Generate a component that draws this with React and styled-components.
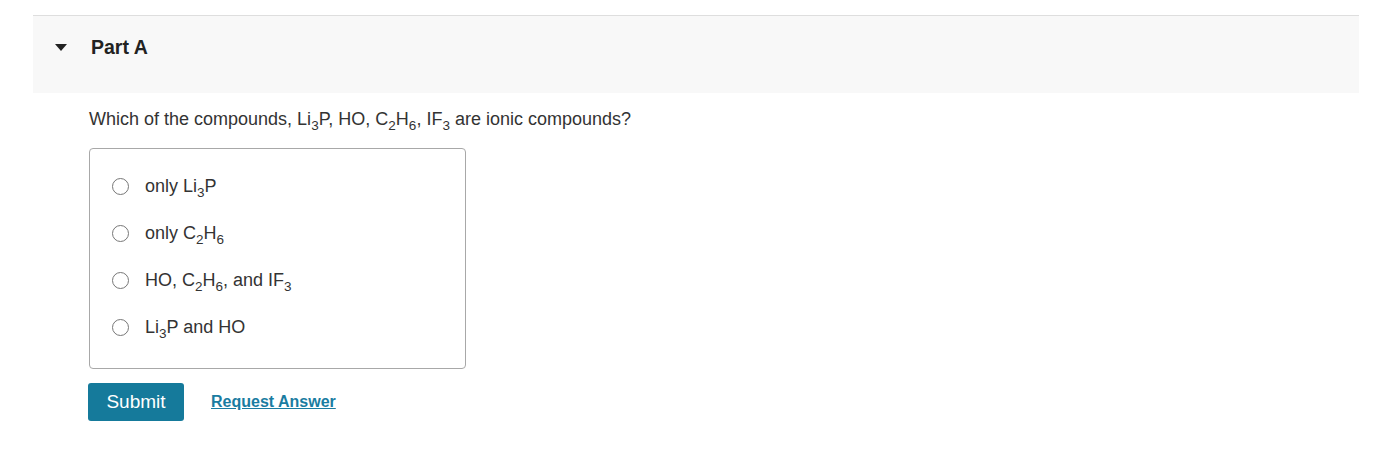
import React from "react";
import styled, { createGlobalStyle } from "styled-components";

const GlobalStyle = createGlobalStyle`
  body {
    margin: 0;
    background: #fff;
    font-family: "Liberation Sans", Arial, sans-serif;
    color: #333;
  }
`;

const Page = styled.div`
  padding: 15px 35px 0 33px;
`;

const PartHeader = styled.div`
  display: flex;
  align-items: center;
  height: 78px;
  background-color: #f8f8f8;
  border-top: 1px solid #dedede;
  padding-left: 22px;
  padding-bottom: 14px;
  box-sizing: border-box;
`;

const Caret = styled.span`
  width: 0;
  height: 0;
  border-left: 6px solid transparent;
  border-right: 6px solid transparent;
  border-top: 7px solid #222;
  margin-right: 24px;
`;

const PartTitle = styled.h2`
  margin: 0;
  font-size: 19.5px;
  font-weight: bold;
  color: #222;
`;

const Body = styled.div`
  padding: 15px 0 0 56px;
`;

const Question = styled.p`
  margin: 0 0 18px;
  font-size: 18px;
  line-height: 22px;
`;

const Choices = styled.div`
  width: 377px;
  box-sizing: border-box;
  border: 1px solid #a8a8a8;
  border-radius: 4px;
  padding: 26px 0 30px 22px;
  display: flex;
  flex-direction: column;
  gap: 25px;
`;

const Choice = styled.label`
  display: flex;
  align-items: center;
  height: 22px;
  font-size: 18px;
  color: #333;
`;

const Radio = styled.span`
  width: 17px;
  height: 17px;
  box-sizing: border-box;
  border: 1px solid #777;
  border-radius: 50%;
  margin-right: 16px;
  flex-shrink: 0;
`;

const Sub = styled.sub`
  font-size: 13.5px;
  vertical-align: -5px;
  line-height: 0;
`;

const Actions = styled.div`
  display: flex;
  align-items: center;
  gap: 27px;
  margin-top: 14px;
`;

const SubmitButton = styled.button`
  width: 96px;
  height: 38px;
  margin-left: -1px;
  border: none;
  border-radius: 3px;
  background-color: #157a9b;
  color: #fff;
  font-family: "Liberation Sans", Arial, sans-serif;
  font-size: 19px;
  cursor: pointer;
`;

const RequestLink = styled.a`
  font-size: 16px;
  font-weight: bold;
  color: #1a7ca1;
  text-decoration: underline;
  cursor: pointer;
`;

const options = [
  <>only Li<Sub>3</Sub>P</>,
  <>only C<Sub>2</Sub>H<Sub>6</Sub></>,
  <>HO, C<Sub>2</Sub>H<Sub>6</Sub>, and IF<Sub>3</Sub></>,
  <>Li<Sub>3</Sub>P and HO</>,
];

export default function App() {
  return (
    <Page>
      <GlobalStyle />
      <PartHeader>
        <Caret />
        <PartTitle>Part A</PartTitle>
      </PartHeader>
      <Body>
        <Question>
          Which of the compounds, Li<Sub>3</Sub>P, HO, C<Sub>2</Sub>H<Sub>6</Sub>, IF<Sub>3</Sub> are ionic compounds?
        </Question>
        <Choices>
          {options.map((opt, idx) => (
            <Choice key={idx}>
              <Radio />
              <span>{opt}</span>
            </Choice>
          ))}
        </Choices>
        <Actions>
          <SubmitButton>Submit</SubmitButton>
          <RequestLink>Request Answer</RequestLink>
        </Actions>
      </Body>
    </Page>
  );
}
